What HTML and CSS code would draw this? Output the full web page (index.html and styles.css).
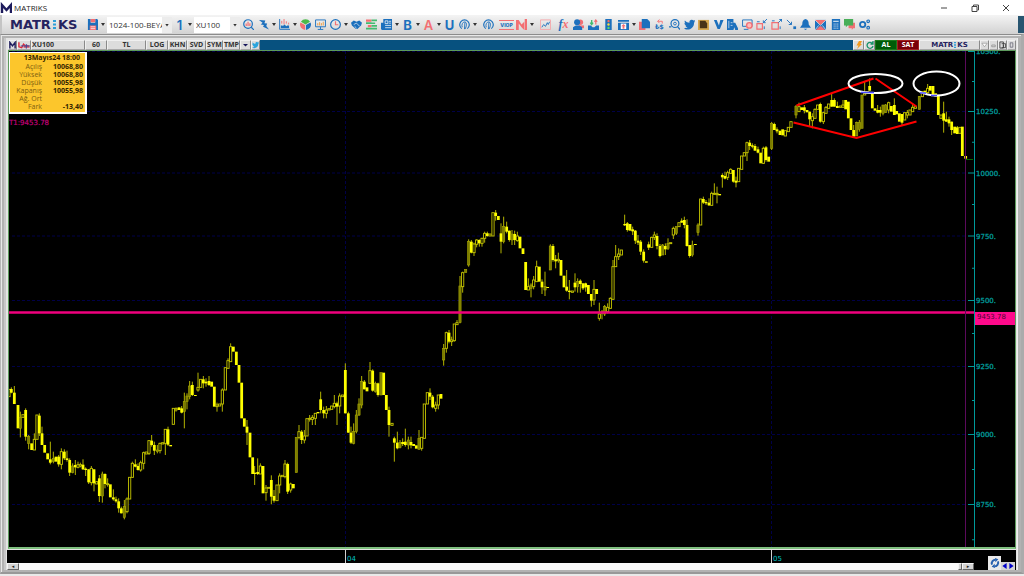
FILE: index.html
```html
<!DOCTYPE html>
<html lang="tr">
<head>
<meta charset="utf-8">
<title>MATRIKS</title>
<link rel="stylesheet" href="styles.css">
</head>
<body>
<header class="titlebar">
  <svg class="app-icon" viewBox="0 0 12 12"><path d="M2 11V3L6.500 8 11 3V11" fill="none" stroke="#1d1b5c" stroke-width="2.400"/></svg>
  <h1 class="title">MATRIKS</h1>
  <button class="win" aria-label="Simge durumu"><svg viewBox="0 0 10 10"><path d="M2 5H8"/></svg></button>
  <button class="win" aria-label="Geri yükle"><svg viewBox="0 0 10 10"><path d="M2 3.500H7V8.500H2zM3.500 3V2H8.500V7H7.500"/></svg></button>
  <button class="win" aria-label="Kapat"><svg viewBox="0 0 10 10"><path d="M2 2L8 8M8 2L2 8"/></svg></button>
</header>

<nav class="toolbar" aria-label="Araçlar">
  <div class="logo">MATR<svg viewBox="0 0 3 9"><path d="M0 0H3V2H0zM0 3.500H3V5.500H0zM0 7H3V9H0z" fill="#2f9fd8"/></svg>KS</div>
  <button class="tool" aria-label="Kaydet"><svg viewBox="0 0 12 12"><path class="b" d="M1 0H4V4H9V0H11L12 1V12H1z"/><path class="r" d="M4 0H9V3.500H4zM3 7H10V12H3z"/><path d="M4 8.500H9M4 10.500H9" stroke="#fff" stroke-width=".8"/></svg></button><i class="caret"></i>
  <label class="combo combo-layout"><select aria-label="Sayfa"><option>1024-100-BEYAZ</option></select></label>
  <button class="tool one">1</button><i class="caret"></i>
  <label class="combo combo-symbol"><select aria-label="Sembol"><option>XU100</option></select></label>
  <button class="tool" aria-label="Ara"><svg viewBox="0 0 12 12"><circle class="bl" cx="5.500" cy="5.500" r="4.700"/><path class="bl" d="M9 9L12 12"/><path class="rl" d="M3.500 7.500V5M5.500 7.500V3M7.500 7.500V4.500"/></svg></button>
  <button class="tool" aria-label="Hızlı"><svg viewBox="0 0 12 12"><path class="b" d="M1 1L8 1.500 7 4.500 10 5 9 7.500 12 11.500 5.500 8.500 6.500 6.500 3 6 5 4z"/></svg></button><i class="caret"></i>
  <button class="tool" aria-label="Grafik"><svg viewBox="0 0 12 12"><path class="bl thin" d="M.7 0V11.300H12"/><path class="rl thin" d="M3 5V2M5.500 6V0M8 5V2.500M10.500 6V4"/><path class="b" d="M2 10V7H4V8L6 6 8 8 9 7 11 7V10z"/></svg></button><i class="caret"></i>
  <button class="tool" aria-label="Dağılım"><svg viewBox="0 0 12 12"><path d="M6 6L1 3A6 6 0 0 1 11 3z" fill="#4cb84a"/><path class="r" d="M5.500 6.500V12A6 6 0 0 1 .5 3.700z"/><path class="b" d="M6.500 6.500V12A6 6 0 0 0 11.500 3.700z"/></svg></button>
  <button class="tool" aria-label="Ekran"><svg viewBox="0 0 12 12"><path class="bl thin" d="M.6 1H11.400V8.500H.6zM6 8.500V11M3 11.400H9"/><path d="M3 7V4.500M5 7V3.500M7 7V4.500M9 7V3" stroke="#f09a3c"/></svg></button>
  <button class="tool" aria-label="Saat"><svg viewBox="0 0 12 12"><circle class="bl" cx="6" cy="6" r="5.300"/><path class="rl" d="M6 2.500V6.300H9"/></svg></button><i class="caret"></i>
  <button class="tool" aria-label="Anlaşma"><svg viewBox="0 0 12 12"><path class="b" d="M0 4L3 1.500 6 3 9 1.500 12 4 11 7 7 11 5 10.500 1 7z"/><path d="M3 6L6 4.500 9.500 8M4 8L6 10" stroke="#e8eef6" fill="none" stroke-width=".8"/></svg></button>
  <button class="tool" aria-label="Derinlik"><svg viewBox="0 0 12 12"><path class="r" d="M0 .5H6V3H0zM2 6.500H6V9H2z"/><path d="M0 3.500H6V5.500H0zM6 .5H12V2.500H6zM6 3.800H10V5.500H6zM6 6.500H12V8.500H6zM0 9.500H12V11.500H0z" fill="#43bb70"/></svg></button>
  <button class="tool" aria-label="Haberler"><svg viewBox="0 0 12 12"><path class="b" d="M2.500 0H12V12H1L0 11V4H2.500z"/><path d="M4.500 2H7.500V5H4.500zM8.500 2.500H11M8.500 4.500H11M4.500 7H11M4.500 9.500H11" stroke="#fff" stroke-width=".8" fill="none"/></svg></button><i class="caret"></i>
  <button class="tool letter">B</button><i class="caret"></i>
  <button class="tool letter red">A</button><i class="caret"></i>
  <button class="tool letter">U</button>
  <button class="tool" aria-label="Gösterge"><svg viewBox="0 0 12 12"><path class="bl" d="M3 10.500A5.200 5.200 0 1 1 9 10.500"/><path class="bl thin" d="M3.500 9C2.500 6 4 3.500 6 3M6 11L6.500 3C9 4.500 8.500 7.500 6.500 11"/></svg></button><i class="caret"></i>
  <button class="tool gap-l" aria-label="Gösterge 2"><svg viewBox="0 0 12 12"><path class="bl" d="M3 10.500A5.200 5.200 0 1 1 9 10.500"/><path class="bl thin" d="M3.500 9C2.500 6 4 3.500 6 3M6 11L6.500 3C9 4.500 8.500 7.500 6.500 11"/></svg></button>
  <button class="tool viop gap-l">VIOP</button>
  <button class="tool" aria-label="M"><svg viewBox="0 0 12 12"><path class="r" d="M0 1L3 1 6 6 9 3V12L6 9 3 5V12H0z"/><path class="r" d="M9.500 0H12V12H9.500z"/></svg></button><i class="caret"></i>
  <button class="tool gap-l" aria-label="Çizgi"><svg viewBox="0 0 12 12"><path class="rl pale" d="M.5 1H11.500V11.500H.5z"/><path class="bl thin" d="M2 9L4 6 6 8 8 4 9 6 10.500 3"/></svg></button>
  <button class="tool fx gap-l">f<b>x</b></button>
  <button class="tool" aria-label="Kullanıcı"><svg viewBox="0 0 12 12"><circle class="r" cx="8" cy="3.500" r="3"/><path class="r" d="M6 7H12V10H6z"/><circle class="b" cx="4.500" cy="3.500" r="3.300"/><path class="b" d="M0 12V9L3 7H7L10 9V12z"/></svg></button>
  <button class="tool" aria-label="İndir"><svg viewBox="0 0 12 12"><path class="b" d="M0 7H3L5 9H7L9 7H12V12H0z"/><path d="M4 1V6M2.500 4L4 6 5.500 4" stroke="#43bb70" fill="none" stroke-width="1.500"/><path class="rl" d="M8.500 6V1M7 3L8.500 1 10 3"/></svg></button>
  <button class="tool" aria-label="Işıklar"><svg viewBox="0 0 12 12"><path class="b" d="M2.500 0H9.500V12H2.500z"/><circle cx="6" cy="2.300" r="1.300" fill="#ff6a5c"/><circle cx="6" cy="6" r="1.300" fill="#ffdb3c"/><circle cx="6" cy="9.700" r="1.300" fill="#5ddb61"/></svg></button>
  <button class="tool" aria-label="Pencere"><svg viewBox="0 0 12 12"><path class="b" d="M0 1H12V3H0zM0 4H12V12H0z"/><path d="M3 5H9V11H3z" fill="#fff"/><path class="r" d="M6 5.500L8.500 8H7V10.500H5V8H3.500z"/></svg></button><i class="caret"></i>
  <button class="tool" aria-label="Kopyala"><svg viewBox="0 0 12 12"><path class="r" d="M0 3H7V12H0z"/><path class="b" d="M3 0H9L12 3V10H3z"/></svg></button>
  <button class="tool" aria-label="Kur"><svg viewBox="0 0 12 12"><path class="rl thin" d="M4 2.500H9V5M6 .5L4 2.500 6 4.500"/><text x="1" y="11" class="cur">₺$</text></svg></button>
  <button class="tool" aria-label="İncele"><svg viewBox="0 0 12 12"><circle class="bl" cx="6.500" cy="5" r="4.300"/><circle class="bl thin" cx="6.500" cy="5" r="1.500"/><path class="bl" d="M9.500 8.500L12 11.500M0 8.500H2.500"/></svg></button>
  <button class="tool narrow" aria-label="Twitter"><svg viewBox="0 0 12 12"><path class="b" d="M0 10C2 10 3 9.700 4 9 2.500 9 2 8 1.500 7H2.500C1 6.500.500 5.500.5 4.300L1.500 4.600C.500 3.500.500 2.500 1 1.500 2.500 3 4 4 6 4 5.500 2 7 .8 8.500.8 9.300.8 10 1.200 10.300 1.600L12 1 11.300 2.600 12 2.500 11 4C11 9 7 12 3 11.500 2 11.300 1 11 0 10z"/></svg></button>
  <button class="tool" aria-label="Altın"><svg viewBox="0 0 12 12"><path fill="#d6a850" d="M0 1H12V12H0z"/><path fill="#4a3418" d="M2 2H8L10 5V10H2z"/></svg></button>
  <button class="tool narrow" aria-label="V"><svg viewBox="0 0 12 12"><path class="b" d="M1 1H4L6.500 7 8 1H11.500L7.500 11H5z"/></svg></button>
  <button class="tool" aria-label="Rapor"><svg viewBox="0 0 12 12"><path class="b" d="M0 0H7V4H9L12 10V12H9L8 9 7 12H0z"/><path d="M2 2V10M4 4H6M4 7H6" stroke="#dfe8f2" stroke-width=".8"/></svg></button>
  <button class="tool narrow" aria-label="Ekran ayarı"><svg viewBox="0 0 12 12"><path class="bl thin" d="M.6 1H11V8H.6zM2 11.300H7"/><circle cx="8" cy="7" r="3" fill="#fbb" stroke="#f36f73" stroke-width="1.500"/></svg></button>
  <button class="tool" aria-label="Küçült"><svg viewBox="0 0 12 12"><path class="rl" d="M1 5H7V11H1z"/><path class="bl thin" d="M1 3H4M9 8V11M12 0L8 4M8 1.500V4H10.500"/></svg></button>
  <button class="tool" aria-label="Büyüt"><svg viewBox="0 0 12 12"><path class="rl" d="M1 4H8V11H1z"/><path class="bl thin" d="M1 2H4M10 8V11M8 4L12 0M9 .5H11.500V3"/></svg></button>
  <button class="tool narrow" aria-label="Bağla"><svg viewBox="0 0 12 12"><path class="bl thin" d="M1 1L6 6M6 3V6H3"/><path class="b" d="M8 8H11V11H8z"/></svg></button>
  <button class="tool" aria-label="Alarm"><svg viewBox="0 0 12 12"><path class="b" d="M6 0C9 1 9.500 3 9.500 6L12 9.500H0L2.500 6C2.500 3 3 1 6 0zM4 10.500H8L6 12z"/></svg></button>
  <button class="tool" aria-label="Mesaj"><svg viewBox="0 0 12 12"><path class="b" d="M0 1H12V12H0z"/><path d="M0 1H12L6 6.500zM1 12L5 8H7L11 12z" fill="#f36f73"/><path d="M0 1L6 7 12 1M0 12L4 7M12 12L8 7" stroke="#fff" fill="none" stroke-width=".7"/></svg></button>
  <button class="tool narrow" aria-label="Hesap makinesi"><svg viewBox="0 0 12 12"><path class="b" d="M2 0H11V12H2z"/><path d="M3.500 2.500H9.500M4 5.500H5M6 5.500H7M8 5.500H9M4 7.700H5M6 7.700H7M8 7.700H9M4 10H5M6 10H7M8 10H9" stroke="#fff"/></svg></button>
  <button class="tool" aria-label="Sohbet"><svg viewBox="0 0 12 12"><path class="r" d="M5 4H12V10H10L8.500 12V10H5z"/><path d="M0 0H10V7H4L2 9V7H0z" fill="#48ae58"/></svg></button>
  <button class="tool" aria-label="Ayarlar"><svg viewBox="0 0 12 12"><circle class="bl heavy" cx="4" cy="6" r="2.900"/><circle class="bl" cx="10" cy="2.500" r="1.400"/><circle class="bl" cx="10" cy="9.500" r="1.400"/></svg></button>
  <span class="dock"></span>
</nav>

<main class="frame">
  <section class="window">
    <div class="chart-head">
      <span class="cell w9"><svg viewBox="0 0 8 8"><path d="M1 8V1L4 5 7 1V8" fill="none" stroke="#1d1b5c" stroke-width="1.600"/></svg></span>
      <span class="cell w13"><svg class="wide" viewBox="0 0 13 8"><path d="M1 1V6L4 7 6 3 8 5" fill="none" stroke="#e02838" stroke-width="1.500"/><path d="M6 7A3.300 3.300 0 0 1 12.600 7z" fill="#d84a60"/><path d="M3 5H13M9 3V8" stroke="#334a9c"/></svg></span>
      <button class="cell symbol">XU100</button>
      <button class="cell w23">60</button>
      <button class="cell w39">TL</button>
      <button class="cell w23">LOG</button>
      <button class="cell w19">KHN</button>
      <button class="cell w19">SVD</button>
      <button class="cell w17">SYM</button>
      <button class="cell w17">TMP</button>
      <button class="cell w11" aria-label="Menü"><i class="caret navy"></i></button>
      <button class="cell w9" aria-label="Tweet"><svg viewBox="0 0 12 12"><path fill="#2ba4dd" d="M0 10C2 10 3 9.700 4 9 2.500 9 2 8 1.500 7H2.500C1 6.500.500 5.500.5 4.300L1.500 4.600C.500 3.500.500 2.500 1 1.500 2.500 3 4 4 6 4 5.500 2 7 .8 8.500.8 9.300.8 10 1.200 10.300 1.600L12 1 11.300 2.600 12 2.500 11 4C11 9 7 12 3 11.500 2 11.300 1 11 0 10z"/></svg></button>
      <span class="spacer"></span>
      <button class="cell w11" aria-label="Hızlı emir"><svg viewBox="0 0 8 8"><path d="M4 0H7L5.500 3H7L2 8 3.500 4.500H1.500z" fill="#f29a1c"/></svg></button>
      <button class="cell w11" aria-label="Yenile"><svg viewBox="0 0 8 8"><path d="M6.500 2.500A3 3 0 1 0 7 5M7 0V3H4.500" fill="none" stroke="#17936a" stroke-width="1.300"/></svg></button>
      <button class="cell w23 buy">AL</button>
      <button class="cell w23 sell">SAT</button>
      <span class="cell brand">MATR<svg viewBox="0 0 3 9"><path d="M0 0H3V2H0zM0 3.500H3V5.500H0zM0 7H3V9H0z" fill="#2f9fd8"/></svg>KS</span>
      <button class="cell w9" aria-label="İndir"><svg viewBox="0 0 8 8"><path d="M1 2H7L4 6z" fill="#fff" stroke="#888" stroke-width=".7"/></svg></button>
      <button class="cell w9" aria-label="Küçült"><svg viewBox="0 0 8 8"><path d="M2 4H6V6H2z" fill="none" stroke="#888" stroke-width=".8"/></svg></button>
      <button class="cell w9" aria-label="Düzen"><svg viewBox="0 0 8 8"><path d="M1 .5H5V7.500H1zM3 2.500H7.500V7H3M5 4V6" fill="none" stroke="#333" stroke-width=".9"/></svg></button>
      <button class="cell w9" aria-label="Kapat"><svg viewBox="0 0 8 8"><path d="M2.500 1.500H5.500V6.500H2.500z" fill="none" stroke="#667" stroke-width=".9"/></svg></button>
    </div>
    <div class="plot">
      <svg id="chart" class="chart" viewBox="9 51 1006 496" preserveAspectRatio="xMinYMin meet" role="img" aria-label="XU100 grafiği">
        <g id="grid"></g>
        <g id="candles"></g>
        <path class="level" d="M9 312.500H974"/>
        <path d="M965.500 51V547" stroke="#5c0a5c"/>
        <path d="M966 159.500H973" stroke="#006c00"/>
        <path class="trend" d="M796.500 105.500L873.500 78.500M875.500 78.500L916.500 106.500M793.500 122.500L856.500 138L916.500 121.500"/>
        <ellipse class="ring" cx="875.500" cy="83.500" rx="27" ry="9.500"/>
        <ellipse class="ring" cx="936.500" cy="83.500" rx="23" ry="12"/>
        <path d="M861 92.500H874M920 93H926M931 95.500H937" stroke="#4a4aff" stroke-width="1.500"/>
        <text x="9" y="125" class="note">T1:9453.78</text>
        <g id="axis"></g>
        <path d="M975 312H1015V325H975z" fill="#ff0a8c"/>
        <text x="977" y="319" class="tag">9453.78</text>
      </svg>
      <table class="info">
        <caption>13Mayıs24 18:00</caption>
        <tr><th>Açılış</th><td>10068,80</td></tr>
        <tr><th>Yüksek</th><td>10068,80</td></tr>
        <tr><th>Düşük</th><td>10055,98</td></tr>
        <tr><th>Kapanış</th><td>10055,98</td></tr>
        <tr><th>Ağ. Ort</th><td></td></tr>
        <tr><th>Fark</th><td>-13,40</td></tr>
      </table>
    </div>
    <div class="time-axis">
      <span class="pre"></span><span class="month">04</span><span class="month">05</span>
    </div>
    <div class="scroll">
      <button class="sbtn" aria-label="Sola kaydır">◂</button>
      <span class="track"></span>
      <button class="sbtn thumb" aria-label="Tutamaç"></button>
      <button class="sbtn" aria-label="Sağa kaydır">▸</button>
      <span class="corner"></span>
      <div class="nav">
        <button class="refresh" aria-label="Yenile"><svg viewBox="0 0 12 12"><path d="M2.500 8C1 5 4 2 6.500 2M9.500 4C11 7 8 10 5.500 10" fill="none" stroke="#2761b0" stroke-width="2.400"/><path d="M6 0L10 1.500 6.500 5zM6 12L2 10.500 5.500 7z" fill="#2761b0"/></svg></button>
        <button class="arrow" aria-label="Geri"><svg viewBox="0 0 7 7"><path d="M6 0V7L1 3.500z"/></svg></button>
        <button class="arrow" aria-label="İleri"><svg viewBox="0 0 7 7"><path d="M1 0V7L6 3.500z"/></svg></button>
      </div>
    </div>
  </section>
</main>
<script src="chart.js"></script>
</body>
</html>
```
FILE: styles.css
```css
* { box-sizing: border-box; }
body {
  margin: 0;
  height: 100vh;
  display: flex;
  flex-direction: column;
  background: #e9e9e9;
  font-family: "Open Sans", "Noto Sans", sans-serif;
  overflow: hidden;
}
button {
  border: 0;
  padding: 0;
  margin: 0;
  background: none;
  font: inherit;
  color: inherit;
}
svg { display: block; }

.titlebar {
  flex: none;
  height: 15px;
  display: flex;
  align-items: center;
  padding-right: 3px;
  background: #fff;
}
.app-icon { width: 12px; height: 12px; }
.title {
  margin: 0 auto 0 2px;
  font-size: 8px;
  line-height: 15px;
  font-weight: 400;
  color: #222;
}
.win { width: 31px; height: 15px; display: grid; place-items: center; }
.win svg { width: 10px; height: 10px; }
.win path { fill: none; stroke: #444; stroke-width: 1; }

.toolbar {
  flex: none;
  height: 19px;
  display: flex;
  align-items: center;
  padding-left: 8px;
  border-left: 2px solid #c4c4c4;
  background: linear-gradient(#f4f4f4, #d2d2d2);
}
.logo, .brand {
  display: flex;
  align-items: center;
  justify-content: center;
  font-family: "DejaVu Sans", sans-serif;
  font-weight: 700;
  color: #25235f;
}
.logo { width: 70px; margin-right: 5px; font-size: 13px; line-height: 18px; justify-content: flex-start; }
.logo svg { width: 3px; height: 9px; margin: 0 2px; }
.tool {
  flex: none;
  width: 15px;
  height: 17px;
  display: flex;
  align-items: center;
  justify-content: center;
  font-family: Inter, "Liberation Sans", sans-serif;
  color: #1c70bd;
}
.tool svg { width: 11px; height: 11px; }
.narrow { width: 14px; }
.gap-l { margin-left: 3px; }
.letter { font-size: 13px; font-weight: 700; }
.one { font-size: 13px; font-weight: 600; }
.red { color: #f36f73; font-weight: 600; }
.viop { font-size: 5px; font-weight: 800; border-block: 1px solid #f36f73; height: 10px; }
.fx { font: italic bold 12px "Liberation Serif", serif; }
.fx b { color: #f36f73; }
.cur { font: bold 7px "DejaVu Sans", sans-serif; fill: #1c70bd; }
.b { fill: #1c70bd; }
.r { fill: #f36f73; }
.bl, .rl { fill: none; stroke: #1c70bd; stroke-width: 1.3; }
.rl { stroke: #f36f73; }
.pale { stroke: #f5a5a8; stroke-width: 1; }
.thin { stroke-width: 1; }
.heavy { stroke-width: 2; }
.caret {
  flex: none;
  width: 4px;
  height: 3px;
  margin: 0 1px;
  background: #333;
  clip-path: polygon(0 0, 100% 0, 50% 100%);
}
.combo {
  flex: none;
  position: relative;
  display: flex;
  height: 16px;
  background: #fff;
}
.combo::after {
  content: "";
  position: absolute;
  right: 3px;
  top: 7px;
  width: 4px;
  height: 3px;
  background: #333;
  clip-path: polygon(0 0, 100% 0, 50% 100%);
}
.combo select {
  appearance: none;
  width: 100%;
  height: 16px;
  border: 0;
  border-right: 10px solid #ececec;
  padding: 0 0 0 2px;
  background: #fff;
  font: 8px "Open Sans", "Noto Sans", sans-serif;
  color: #333;
}
.combo-layout { width: 65px; margin-left: 1px; }
.combo-symbol { width: 46px; margin: 0 1px; }
.dock { width: 6px; height: 17px; margin-left: auto; background: #285570; }

.frame {
  flex: 1;
  min-height: 0;
  display: flex;
  padding: 3px 3px 2px;
  margin-bottom: 2px;
  border: 1px solid #8c8c8c;
  border-right-width: 3px;
  border-bottom: 2px solid #989898;
  border-right-color: #ababab;
  border-left-color: #b8b8b8;
  background: #b2b2b2;
  box-shadow: inset 0 1px #e8e8e8, inset 1px 0 #e8e8e8;
}
.window {
  flex: 1;
  min-width: 0;
  display: flex;
  flex-direction: column;
  padding: 2px 1px 0 3px;
  border-right: 1px solid #efefef;
  background: linear-gradient(90deg, #c8c8c8 0 2px, #e4e4e4 2px);
}
.chart-head {
  flex: none;
  height: 10px;
  display: flex;
  margin-left: 1px;
  background: #07517f;
}
.cell {
  flex: none;
  display: flex;
  align-items: center;
  justify-content: center;
  height: 10px;
  border: 1px solid #f0f0f0;
  border-right-color: #8a8a8a;
  border-bottom-color: #a8a8a8;
  background: #dcdcdc;
  font-size: 7px;
  line-height: 8px;
  font-weight: 700;
  color: #333;
}
.cell svg { width: 8px; height: 8px; }
.cell svg.wide { width: 13px; }
.symbol { width: 54px; justify-content: flex-start; padding-left: 0; }
.w9 { width: 9px; }
.w11 { width: 11px; }
.w13 { width: 14px; }
.w17 { width: 17px; }
.w19 { width: 19px; }
.w23 { width: 22px; }
.w39 { width: 39px; }
.spacer { flex: 1; }
.navy { width: 6px; height: 3px; background: #16165c; }
.buy, .sell { border-color: #1c7a1c; background: #005c08; color: #fff; }
.sell { border-color: #a02020; background: #780008; }
.cell.brand { width: 61px; font-size: 7px; color: #25235f; }
.cell.brand svg { width: 2px; height: 6px; margin: 0 1px; }

.plot {
  position: relative;
  flex: 1;
  min-height: 0;
  margin-left: 1px;
  border: 1px solid #5d9a5d;
  border-bottom: 2px solid #7fc07f;
  background: #000;
}
.chart { width: 100%; height: 100%; }
.chart text { font-family: "DejaVu Sans", sans-serif; font-size: 7px; }
.chart .note { fill: #c4007a; stroke: #c4007a; stroke-width: .2px; }
.tag { fill: #4a0630; }
.axis-text { fill: #009a9a; stroke: #009a9a; stroke-width: .3px; }
.grid-line { stroke: #000048; stroke-dasharray: 3 2; }
.axis-line { stroke: #009a9a; stroke-width: 1; fill: none; }
.level { stroke: #f0007e; stroke-width: 2.500; }
.trend { fill: none; stroke: #f00; stroke-width: 2; }
.ring { fill: none; stroke: #fff; stroke-width: 2; }
.wick { stroke: #b4b400; stroke-width: 1; }
.solid { fill: #ff0; }
.hollow { fill: #000; stroke: #c8c800; stroke-width: .9; }
.dim { fill: #7c7c00; stroke: #a8a800; stroke-width: .6; }

.info {
  position: absolute;
  left: 0;
  top: 0;
  width: 78px;
  border: 2px solid #fff;
  border-top-width: 1px;
  border-left-width: 1px;
  border-spacing: 0;
  padding: 0 2px 1px 4px;
  background: #fcc62c;
  font-size: 7px;
  line-height: 8px;
}
.info caption {
  height: 11px;
  margin: 1px 2px -11px 1px;
  padding: 2px 5px 0 0;
  position: relative;
  font-weight: 700;
  text-align: right;
  color: #332400;
}
.info tr:first-of-type th, .info tr:first-of-type td { padding-top: 10px; }
.info th, .info td { height: 8px; padding: 0; text-align: right; }
.info th { font-weight: 400; color: #806010; width: 28px; }
.info td { font-weight: 700; color: #332400; }

.time-axis {
  flex: none;
  height: 14px;
  display: grid;
  grid-template-columns: 338fr 426fr 245fr;
  border-top: 1px solid #e4e4e4;
  background: #000;
}
.month {
  border-left: 1px solid #d0d0d0;
  padding: 5px 0 0 1px;
  font: 7px/8px "DejaVu Sans", sans-serif;
  color: #00c4c4;
}
.scroll {
  flex: none;
  height: 7px;
  display: flex;
  background: #000;
}
.sbtn {
  width: 12px;
  background: #d4d4d4;
  border: 1px solid #f4f4f4;
  border-right-color: #666;
  border-bottom-color: #666;
  font: 5px/5px "DejaVu Sans", sans-serif;
  color: #222;
}
.thumb { width: 4px; }
.track { flex: 1; background: #fafafa; }
.corner { width: 14px; }
.nav {
  display: flex;
  align-items: flex-end;
  width: 28px;
  margin-top: -7px;
  z-index: 1;
}
.refresh {
  flex: none;
  width: 13px;
  height: 14px;
  display: grid;
  place-items: center;
  background: #eaeaea;
}
.refresh svg { width: 10px; height: 10px; }
.arrow { width: 7px; height: 8px; background: #d4d4d4; }
.arrow svg { width: 7px; height: 6px; }
.arrow path { fill: #0000c8; }
```
FILE: chart.js
```javascript
// Candles: x, type (s falling, h rising, d dim rising), body top, body bottom, optional high and low.
// Values are in thirds of a chart unit, relative to each segment's origin.
const segments = [
  { x: 0, y: 330, data: `27 h 178 200,34 s 177 188 172 190,43 s 188 222 168 222,54 s 225 295,61 d 262 295 245 322,69 h 254 262,77 s 240 320 235 332,86 d 320 340 315 358,95 s 340 360,103 h 328 360 310 360,111 h 255 328,118 s 257 310 250 318,126 s 310 345 290 345,134 s 345 368,143 s 370 388,151 s 388 398 335 403,160 d 385 395 365 400,168 s 380 395,176 s 380 403 375 410,184 h 365 403 355 418,193 s 365 385 358 390,201 s 385 390 362 395,209 s 390 428 385 438,218 d 408 428 400 430,226 s 405 412 390 435,234 h 404 412 395 415,241 h 404 408 398 412,249 s 404 418 388 420,257 s 416 420 412 438,266 s 418 457 418 462,274 h 415 458 408 466,282 s 418 460 418 484,290 h 455 462,298 s 445 498 435 516,307 d 432 498 425 518,315 s 432 462 430 475,323 h 461 464 445 470,331 s 463 502,340 s 502 508 478 512,348 s 508 514 500 518,356 s 514 535 505 548,364 s 535 550 530 550,373 d 530 562 510 568,381 h 507 545 502 550,389 h 442 507,397 h 400 442 395 442,406 s 403 410 388 412,414 s 408 420 400 422,422 h 398 420 392 425,431 h 368 400 365 418,439 h 366 372,447 h 332 370 330 375,455 s 332 345 315 350,463 s 345 362 335 375,472 d 360 365 345 370,480 h 340 362 338 370,488 h 338 342,496 h 298 340 298 375,504 s 298 344 290 348,512 s 345 349,520 h 235 283,528 h 236 240 232 245,537 s 232 240,545 s 235 248 228 250,553 d 215 245 188 295,561 d 198 215 190 238,569 d 168 200 153 208,577 s 165 195 155 198,586 s 195 198,594 h 172 180 128 185,602 h 148 172,610 s 148 160 138 175,618 s 155 160 145 170,627 s 153 165 138 168,635 s 155 170,643 s 170 230,651 h 225 230 218 245,659 h 222 228,667 h 180 222 175 245,676 h 113 180,684 h 92 115 85 115,692 h 50 95 40 95,700 s 50 65,709 s 65 105,717 s 105 158,725 s 158 265,733 s 265 290,741 s 290 308 270 345,750 s 308 382,758 s 382 432` },
  { x: 230, y: 330, data: `74 s 428 432 408 465,83 s 426 432 385 435,91 h 408 432 400 432,99 s 408 490,108 h 474 488 465 512,116 h 472 475,124 s 450 500 436 523,132 s 498 512 480 518,141 h 465 512,149 h 438 465 430 490,157 h 436 440,165 h 402 440 390 445,173 s 402 485 398 492,182 h 462 480 458 488,190 s 462 475,199 d 322 428,207 h 305 322 285 328,215 s 305 330 300 342,223 h 318 330 300 340,231 h 266 318,239 h 265 268 255 275,247 h 262 268 255 285,256 h 250 265 250 285,264 s 246 250,272 s 208 240 185 250,281 s 240 250 230 265,289 h 240 250 228 265,297 h 236 240,305 h 228 238,313 h 220 230 195 235,321 s 220 230 215 285,329 h 198 228 190 250,338 h 195 200,346 s 120 250 100 250,355 s 250 308 245 308,363 s 308 338 290 342,371 d 305 340 280 343,379 d 255 305 240 310,387 d 222 255 205 258,395 d 155 225 138 235,403 s 155 178 150 178,411 s 172 184,420 h 122 160 96 160,428 s 122 182 118 185,436 d 160 185 155 188,444 s 160 195 158 200,453 d 128 195,461 s 128 195,469 s 195 240,477 s 240 285 230 320,486 h 280 286,493 s 325 338 320 395,502 s 338 355 305 358,510 d 338 352 330 355,518 s 336 342 325 348,526 s 335 345 296 350,535 d 330 345 320 358,543 s 336 346 320 355,551 s 342 348,559 s 346 356,567 d 325 358 300 358,575 h 322 355 322 362,583 h 222 325,592 h 188 222,600 s 188 200 175 210,608 s 200 232 195 235,617 h 225 235 215 245,625 h 195 225 195 238,633 s 192 206` },
  { x: 420, y: 190, data: `71 d 475 510 462 527,79 h 428 475 425 488,87 s 428 455 420 460,95 h 450 455 440 468,103 h 402 452 402 455,111 h 398 404 390 405,120 d 288 398 258 400,128 h 248 290 245 308,137 d 238 248,146 d 155 225 148 230,154 s 155 188 150 190,162 h 162 188 158 198,170 h 150 163 148 172,178 s 150 160 148 170,186 h 145 160 143 170,194 h 130 145 125 158,202 s 130 138 125 140,210 h 132 138,219 h 68 138,227 s 68 78 60 92,235 s 78 90,243 s 130 155 100 190,251 d 110 155 80 160,260 s 110 125 95 130,268 s 122 150 122 155,276 d 132 150 120 165,284 s 132 150 122 165,292 h 138 152 125 155,300 s 140 175,309 s 175 192,317 s 216 300,325 h 290 300 265 300,333 d 285 295 280 322,341 h 270 290 258 298,350 h 230 275 212 275,358 s 230 275,366 s 275 292 268 312,375 d 290 300 245 318,383 s 291 293,391 d 168 240 163 240,399 s 168 210 162 215,407 s 208 214 195 235,415 h 208 212 188 218,423 s 210 257,432 s 257 292,440 s 290 302 240 305,448 s 302 306 270 328,457 h 303 307,465 s 278 292 250 305,473 d 275 290 265 308,481 s 272 282 268 308,489 s 280 295 280 300,497 s 280 292 278 305,505 s 285 312,514 s 312 332 312 350,522 h 298 330 270 345,530 s 297 312,538 h 372 385 338 392,546 s 365 370 360 388,554 d 350 372 345 378,563 h 352 365 340 370,571 h 325 355 322 355,579 h 230 328 210 328,587 h 200 230 165 230,596 h 192 200 175 210,604 h 180 195` },
  { x: 600, y: 120, data: `74 s 312 316 284 318,82 s 310 330 306 335,90 s 312 332,98 s 328 334 320 345,106 s 332 362 330 372,114 s 362 368 345 375,122 s 365 395 360 405,131 s 395 422 388 428,139 s 424 428,146 s 373 383 365 390,155 h 352 382 350 382,163 h 345 352 335 360,171 s 348 378 340 388,180 s 378 408 372 412,188 d 375 405 372 405,196 s 378 388 370 405,204 d 370 385 355 390,212 h 368 370,220 h 325 345 320 357,229 d 320 340 320 345,237 h 308 320,245 s 302 308 295 308,253 s 300 315 290 325,261 s 315 378 298 380,269 s 375 408 375 413,277 d 375 405 362 410,286 s 372 374,294 d 315 338 310 347,302 h 237 315,310 s 237 248 230 252,318 s 246 250 240 255,327 s 248 256 235 258,335 h 220 256 215 256,343 h 220 222 190 225,351 h 220 224 200 250,359 s 222 226,367 s 165 172 160 203,375 s 168 176 155 178,383 h 158 172 152 180,392 h 148 160 145 160,400 s 150 185 150 188,408 s 182 188 170 202,416 h 145 185,425 h 108 148,433 h 98 108,441 h 68 98 65 123,449 s 68 78 60 90,457 s 76 80 70 85,465 s 78 92 72 92,474 s 88 98 80 100,482 s 98 130,490 h 85 130 80 132,498 s 82 120 78 125,506 s 110 125,515 d 10 85 6 90,523 s 12 30 8 30,531 s 28 34 22 40,540 s 32 45,548 s 28 46,556 h 32 48,565 h 22 35,573 h 5 22` },
  { x: 780, y: 50, data: `48 d 170 195 165 205,57 h 170 185 158 185,65 s 172 180,73 s 172 182 165 190,81 s 180 187,89 s 185 208 185 228,97 h 200 212 190 235,105 h 178 205 175 205,113 h 165 178,121 s 162 215 158 218,130 h 188 215 185 222,138 h 172 190 168 190,146 h 162 175,155 s 150 170 130 170,163 s 150 170 145 170,172 s 168 174 155 174,181 h 168 172,189 h 165 172 150 172,197 s 150 178,205 s 155 205,213 s 205 240,221 s 240 260 225 260,230 d 218 258 215 258,238 d 218 238 210 245,246 d 135 235,254 h 130 135 95 135,262 h 125 130,269 s 108 122 85 122,277 s 130 175,285 s 175 182,293 s 180 188 165 190,301 s 180 188 170 200,309 d 165 190 165 196,317 d 165 188 162 188,326 h 158 180 155 190,334 s 168 185,343 s 165 195 145 195,350 s 183 193,358 s 190 215,366 s 192 218 192 228,374 h 188 210,382 h 188 195 180 205,390 h 180 195,398 h 172 185 162 185,406 h 170 175,418 d 140 178 138 178,427 h 125 140,435 s 122 130,443 h 115 128 102 128,451 s 108 122,459 s 108 135,467 s 130 140,475 s 138 195,483 h 195 205,491 s 190 212 155 248,499 s 208 215 185 215,507 s 208 220 200 230,515 s 215 240 215 255,524 s 230 250,532 s 232 252 228 252,540 h 232 250,547 s 230 318,557 s 318 326` }
];
const kinds = { s: "solid", h: "hollow", d: "dim" };
let marks = "";
for (const seg of segments) {
  for (const item of seg.data.split(",")) {
    const [cx, kind, ...v] = item.split(" ");
    const x = seg.x + cx / 3;
    const [top, bottom, high, low] = v.map(n => seg.y + n / 3);
    if (high !== undefined) marks += `<path class="wick" d="M${x} ${high}V${low}"/>`;
    const inset = kind === "s" ? 0 : 0.3;
    marks += `<rect class="${kinds[kind]}" x="${x - 1.4 + inset}" y="${top}" width="${2.8 - 2 * inset}" height="${Math.max(1, bottom - top)}"/>`;
  }
}
document.getElementById("candles").innerHTML = marks;

const prices = [[10500, 51.5], [10250, 111.5], [10000, 173], [9750, 236], [9500, 300.5], [9250, 366.5], [9000, 434.5], [8750, 504.5]];
let grid = "", axis = '<path class="axis-line" d="M974.5 51V547"/>';
prices.forEach(([price, y], i) => {
  grid += `<path class="grid-line" d="M12 ${y}H965"/>`;
  axis += `<path class="axis-line" d="M968 ${y}H974"/><text class="axis-text" x="976" y="${y + 2.5}">${price}.</text>`;
  const next = i < prices.length - 1 ? prices[i + 1][1] : 575;
  axis += `<path class="axis-line" d="M972 ${(y + next) / 2}H974"/>`;
});
for (const x of [345.5, 771.5]) grid += `<path class="grid-line" d="M${x} 51V547"/>`;
document.getElementById("grid").innerHTML = grid;
document.getElementById("axis").innerHTML = axis;
```
